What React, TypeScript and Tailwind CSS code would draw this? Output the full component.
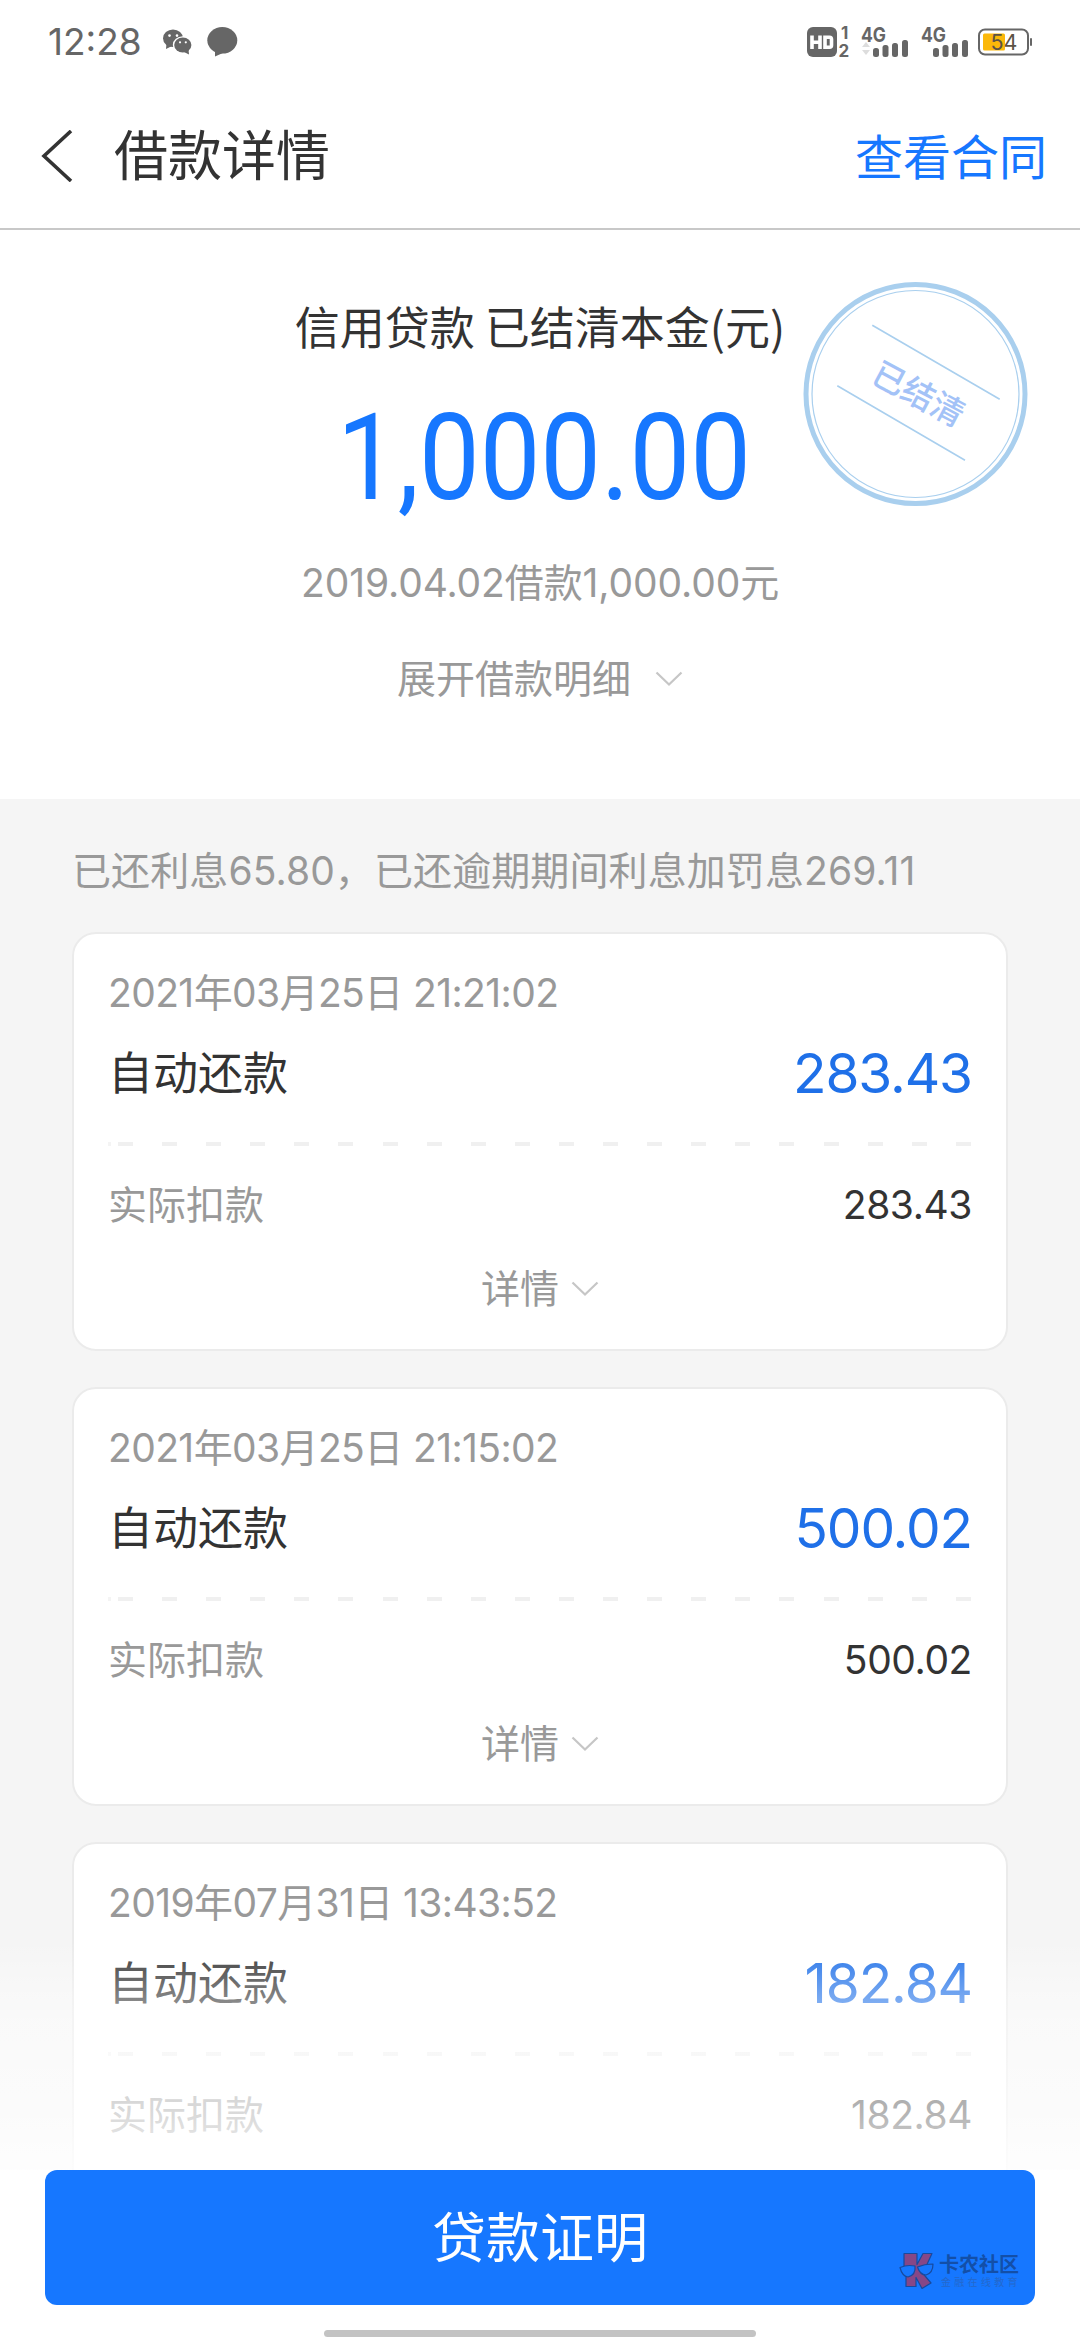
type Repayment = { time: string; title: string; amount: string; expandable?: boolean };

const repayments: Repayment[] = [
  { time: "2021年03月25日 21:21:02", title: "自动还款", amount: "283.43", expandable: true },
  { time: "2021年03月25日 21:15:02", title: "自动还款", amount: "500.02", expandable: true },
  { time: "2019年07月31日 13:43:52", title: "自动还款", amount: "182.84" },
];

function ChevronDown() {
  return (
    <svg width="28" height="16" viewBox="0 0 28 16" fill="none" stroke="#c6c6c6" strokeWidth="2.2">
      <path d="M1.5 1.5 14 13.5 26.5 1.5" />
    </svg>
  );
}

function Signal({ arrows }: { arrows?: boolean }) {
  return (
    <svg className="overflow-visible" width="48" height="32" viewBox="0 0 48 32" fill="#666">
      <text x="0" y="15.5" fontFamily="Inter, sans-serif" fontWeight="700" fontSize="20" textLength="25" lengthAdjust="spacingAndGlyphs">
        4G
      </text>
      {arrows && (
        <g fill="#ddd">
          <path d="M1 21h8l-4-5z" />
          <path d="M1 24h8l-4 5z" />
        </g>
      )}
      <rect x="12" y="22" width="6" height="9" rx="2.5" />
      <rect x="21.5" y="19" width="6" height="12" rx="2.5" />
      <rect x="31" y="17" width="6" height="14" rx="2.5" />
      <rect x="41" y="14" width="6" height="17" rx="2.5" />
    </svg>
  );
}

function StatusBar() {
  return (
    <div className="flex h-[84px] shrink-0 items-center pl-[48px] pr-[47px] text-[#666]">
      <span className="w-[94px] text-[37px] leading-[40px] whitespace-nowrap">12:28</span>
      <svg className="ml-[21px]" width="29" height="26" viewBox="0 0 29 26">
        <g fill="#666">
          <ellipse cx="10" cy="9.3" rx="10" ry="8.8" />
          <path d="M3.5 14 3 20l6-3z" />
          <ellipse cx="19.8" cy="16" rx="10" ry="8.8" fill="#fff" />
          <ellipse cx="19.8" cy="16" rx="8.6" ry="7.5" />
          <path d="m21 23 5 2.5-.5-5z" />
        </g>
        <g fill="#fff">
          <circle cx="6.5" cy="6.6" r="1.3" />
          <circle cx="14" cy="6.6" r="1.3" />
          <circle cx="17" cy="13.3" r="1.1" />
          <circle cx="22.8" cy="13.3" r="1.1" />
        </g>
      </svg>
      <svg className="ml-[15px]" width="31" height="30" viewBox="0 0 31 30" fill="#666">
        <ellipse cx="15.3" cy="13.3" rx="15" ry="13.2" />
        <path d="M8 22v7.5l9-4z" />
      </svg>
      <div className="ml-auto flex items-center">
        <svg className="overflow-visible" width="44" height="32" viewBox="0 0 44 32">
          <rect x="0" y="1" width="30" height="30" rx="6" fill="#666" />
          <g fill="none" stroke="#fff" strokeWidth="3.6">
            <path d="M5 9.5v13.5M13 9.5v13.5M5 16.2h8" />
            <path d="M18 11.3h4.5q2 0 2 2v6q0 2-2 2H18z" />
          </g>
          <g fill="#666" fontFamily="Inter, sans-serif" fontWeight="700" fontSize="17">
            <text x="34" y="13">1</text>
            <text x="31.5" y="30.5">2</text>
          </g>
        </svg>
        <div className="ml-[10px] flex gap-3">
          <Signal arrows />
          <Signal />
        </div>
        <svg className="ml-[9px]" width="55" height="28" viewBox="0 0 55 28">
          <rect x="1" y="1.5" width="49" height="25" rx="6" fill="none" stroke="#666" strokeWidth="2" />
          <rect x="5" y="5.5" width="22" height="17" rx="1.5" fill="#fbb80a" />
          <rect x="52" y="10" width="2" height="8" rx="1" fill="#666" />
          <text x="12.5" y="22" fontFamily="Inter, sans-serif" fontSize="21.5" fill="#5c5346">
            54
          </text>
        </svg>
      </div>
    </div>
  );
}

function Stamp() {
  return (
    <svg
      className="absolute left-[800px] top-[49px]"
      width="230"
      height="230"
      viewBox="0 0 230 230"
      fill="none"
      stroke="#a9cfee"
    >
      <circle cx="115.5" cy="115" r="109.5" strokeWidth="5" />
      <circle cx="115.5" cy="115" r="103.5" strokeWidth="1.2" />
      <path d="M72.300 46.300 199.700 120.300M37.300 106.700 165 181.300" strokeWidth="1.6" />
      <text
        transform="translate(118.500 115) rotate(28)"
        y="12"
        textAnchor="middle"
        fontFamily="'Noto Sans CJK SC', sans-serif"
        fontWeight="500"
        fontSize="33"
        fill="#a3c2f7"
        stroke="none"
      >
        已结清
      </text>
    </svg>
  );
}

function RepaymentCard({ item }: { item: Repayment }) {
  return (
    <div className="flex h-[419px] shrink-0 flex-col rounded-3xl border-2 border-[#ebebeb] bg-white px-[34px] pt-[34px]">
      <div className="text-[39px] leading-[50px] tracking-[-0.6px] text-[#999]">{item.time}</div>
      <div className="mt-[25px] flex h-[60px] items-center justify-between">
        <span className="pt-px text-[45px] leading-[60px] text-[#333]">{item.title}</span>
        <span className="text-[55px] leading-[60px] tracking-[-1.1px] text-[#1f70e8]">{item.amount}</span>
      </div>
      <div className="mt-[39px] h-[4px] bg-[linear-gradient(90deg,#f4f4f4_0,#f4f4f4_3px,transparent_3px),repeating-linear-gradient(90deg,#f0f0f0_0,#f0f0f0_15px,transparent_15px,transparent_44.1px)] bg-[position:0_0,10px_0] bg-no-repeat" />
      <div className="mt-[34px] flex h-[50px] items-center justify-between text-[39px] leading-[50px]">
        <span className="text-[#999]">实际扣款</span>
        <span className="tracking-[-0.4px] text-[#333]">{item.amount}</span>
      </div>
      {item.expandable && (
        <div className="mt-[34px] flex h-[50px] items-center justify-center gap-[12px] text-[39px] leading-[50px] text-[#999]">
          详情
          <ChevronDown />
        </div>
      )}
    </div>
  );
}

function Watermark() {
  return (
    <div className="absolute bottom-[16px] right-[15px] flex items-center gap-1 font-['Noto_Sans_CJK_SC',sans-serif]">
      <svg width="35" height="37" viewBox="0 0 35 37" stroke="#174a9e" strokeWidth="1.2" strokeLinejoin="round">
        <path d="M5 1.500h13v11l6-11h9l-6 13-6 3.500 11 13-9 5.500-6-11v9H7V23l2-5-4-4z" fill="#864787" />
        <path d="M1 15.500q7-3 15-1.500 1 9-7 11-6-1-8-9.500zM18.500 15q7-3 15.500-3 0 9-7 11-6 0-8.500-8z" fill="#1677ff" />
      </svg>
      <div className="flex w-[82px] flex-col">
        <span className="text-[20px] font-bold leading-[22px] text-[#134fa8] whitespace-nowrap">卡农社区</span>
        <span className="pl-[3px] text-[10px] leading-[13px] tracking-[3.3px] text-[#2468cc] whitespace-nowrap">
          金融在线教育
        </span>
      </div>
    </div>
  );
}

export default function App() {
  return (
    <div className="relative flex h-[2340px] w-[1080px] flex-col overflow-hidden bg-white font-['Inter','Noto_Sans_CJK_SC',sans-serif]">
      <StatusBar />
      <header className="flex h-[146px] shrink-0 items-center border-b-2 border-[#c8c8c8] pl-[40px] pr-[33px]">
        <svg width="34" height="52" viewBox="0 0 34 52" fill="none" stroke="#333" strokeWidth="3.6">
          <path d="M31 1 4 26l27 25" />
        </svg>
        <h1 className="ml-[40px] mt-[2px] text-[54px] leading-[64px] text-[#333]">借款详情</h1>
        <a className="ml-auto mt-[4px] text-[48px] leading-[60px] text-[#1677ff]">查看合同</a>
      </header>

      <section className="relative flex h-[569px] shrink-0 flex-col items-center pt-[68px]">
        <div className="font-['Noto_Sans_CJK_SC',sans-serif] text-[45px] leading-[56px] text-[#333]">
          信用贷款 已结清本金(元)
        </div>
        <div className="ml-[7px] mt-[44px] scale-x-90 font-['Roboto',sans-serif] text-[120px] leading-[120px] text-[#1677ff]">
          1,000.00
        </div>
        <div className="mt-[40px] text-[39px] leading-[50px] tracking-[-0.1px] text-[#999]">
          2019.04.02借款1,000.00元
        </div>
        <div className="mt-[46px] flex items-center gap-[24px] text-[39px] leading-[50px] text-[#999]">
          展开借款明细
          <ChevronDown />
        </div>
        <Stamp />
      </section>

      <main className="mb-[170px] flex flex-1 flex-col gap-9 overflow-hidden bg-[#f5f5f5] px-[72px] pt-[47px]">
        <p className="text-[39px] leading-[50px] tracking-[0.1px] text-[#999] whitespace-nowrap">
          已还利息65.80，已还逾期期间利息加罚息269.11
        </p>
        {repayments.map((item) => (
          <RepaymentCard key={item.time} item={item} />
        ))}
      </main>

      <footer className="absolute inset-x-0 bottom-0 flex h-[400px] flex-col items-center justify-end bg-[linear-gradient(180deg,rgba(255,255,255,0)_0px,rgba(255,255,255,0.42)_62px,rgba(255,255,255,0.64)_175px,rgba(255,255,255,0.85)_229px,#fff_250px)]">
        <button className="relative h-[135px] w-[990px] rounded-xl bg-[#1677ff] pt-[2px] text-[54px] leading-[133px] text-white">
          贷款证明
          <Watermark />
        </button>
        <div className="mb-[3px] mt-[25px] h-[7px] w-[432px] rounded-full bg-[#c3c3c3]" />
      </footer>
    </div>
  );
}
